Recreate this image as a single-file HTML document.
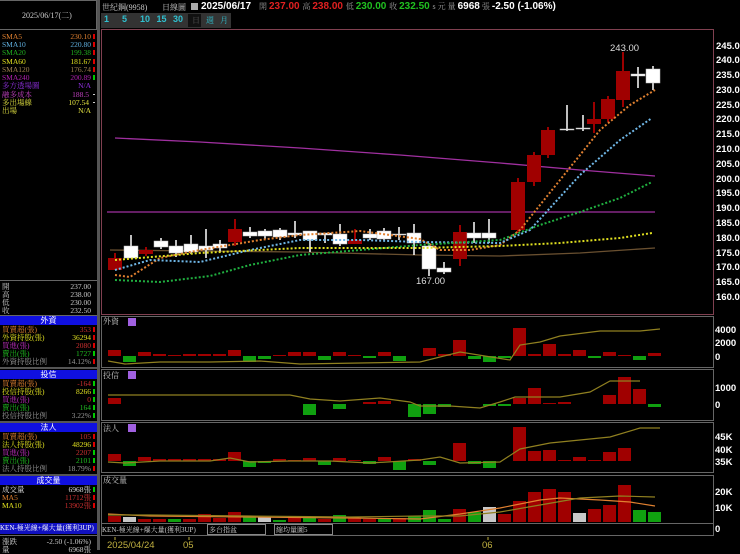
<!DOCTYPE html>
<html><head><meta charset="utf-8"><style>
*{margin:0;padding:0;box-sizing:border-box}
body{width:740px;height:550px;background:#000;overflow:hidden;position:relative;font-family:"Liberation Sans","Noto Sans CJK TC",sans-serif;color:#ddd}
.a{position:absolute;white-space:nowrap}
.s{font-size:8px;font-family:"Liberation Serif","Noto Serif CJK SC",serif}
.hd{position:absolute;left:0;width:97px;height:9px;background:#1010e0;color:#fff;font-size:8px;text-align:center;line-height:9px}
.row{position:absolute;left:2px;width:93px;font-size:7.5px;height:9px;line-height:9px;font-family:"Liberation Serif","Noto Serif CJK SC",serif}
.row span{position:absolute;right:4px}
.row i{position:absolute;right:0;top:2px;width:2px;height:5px;background:#d00}
.row i.g{background:#0c0}
</style></head><body>
<div class="a" style="left:0;top:0;width:97px;height:30px;border:1px solid #666;border-left:0"></div>
<div class="a s" style="left:22px;top:10px;color:#ccc">2025/06/17(二)</div>
<div class="a" style="left:97px;top:0;width:3px;height:550px;background:#555"></div>
<div class="row" style="top:32px;color:#e08030">SMA5<span>230.10</span><i></i></div>
<div class="row" style="top:40px;color:#60b0e0">SMA10<span>220.80</span><i></i></div>
<div class="row" style="top:48px;color:#20b020">SMA20<span>199.38</span><i></i></div>
<div class="row" style="top:57px;color:#e0e020">SMA60<span>181.67</span><i></i></div>
<div class="row" style="top:65px;color:#a08050">SMA120<span>176.74</span><i></i></div>
<div class="row" style="top:73px;color:#b020b0">SMA240<span>200.89</span><i class="g"></i></div>
<div class="row" style="top:81px;color:#9030e0">多方透場圖<span>N/A</span></div>
<div class="row" style="top:90px;color:#c040c0">融多成本<span style="right:6px">188.5</span><i style="background:#ccc;height:1px;top:4px"></i></div>
<div class="row" style="top:98px;color:#e0e040">多出場線<span style="right:6px">107.54</span><i style="background:#ccc;height:1px;top:4px"></i></div>
<div class="row" style="top:106px;color:#e0e040">出場<span>N/A</span></div>
<div class="a" style="left:0;top:280px;width:97px;height:1px;background:#666"></div>
<div class="row" style="top:282px;color:#ccc">開<span>237.00</span></div>
<div class="row" style="top:290px;color:#ccc">高<span>238.00</span></div>
<div class="row" style="top:298px;color:#ccc">低<span>230.00</span></div>
<div class="row" style="top:306px;color:#ccc">收<span>232.50</span></div>
<div class="a" style="left:0;top:315px;width:97px;height:1px;background:#666"></div>
<div class="hd" style="top:316px">外資</div>
<div class="row" style="top:325px;color:#e08030">買賣超(張)<span style="color:#d03030">353</span><i></i></div>
<div class="row" style="top:333px;color:#e0e020">外資持股(張)<span>36294</span><i></i></div>
<div class="row" style="top:341px;color:#c030c0">買進(張)<span style="color:#d03030">2080</span><i></i></div>
<div class="row" style="top:349px;color:#20c020">賣出(張)<span>1727</span><i class="g"></i></div>
<div class="row" style="top:357px;color:#999">外資持股比例<span>14.12%</span><i></i></div>
<div class="a" style="left:0;top:367px;width:97px;height:2px;background:#555"></div>
<div class="hd" style="top:370px">投信</div>
<div class="row" style="top:379px;color:#e08030">買賣超(張)<span style="color:#d03030">-164</span><i class="g"></i></div>
<div class="row" style="top:387px;color:#e0e020">投信持股(張)<span>8266</span><i class="g"></i></div>
<div class="row" style="top:395px;color:#c030c0">買進(張)<span style="color:#d03030">0</span><i class="g"></i></div>
<div class="row" style="top:403px;color:#20c020">賣出(張)<span>164</span><i class="g"></i></div>
<div class="row" style="top:411px;color:#999">投信持股比例<span>3.22%</span><i class="g"></i></div>
<div class="a" style="left:0;top:421px;width:97px;height:2px;background:#555"></div>
<div class="hd" style="top:423px">法人</div>
<div class="row" style="top:432px;color:#e08030">買賣超(張)<span style="color:#d03030">105</span><i></i></div>
<div class="row" style="top:440px;color:#e0e020">法人持股(張)<span>48296</span><i></i></div>
<div class="row" style="top:448px;color:#c030c0">買進(張)<span style="color:#d03030">2207</span><i class="g"></i></div>
<div class="row" style="top:456px;color:#20c020">賣出(張)<span>2101</span><i class="g"></i></div>
<div class="row" style="top:464px;color:#999">法人持股比例<span>18.79%</span><i></i></div>
<div class="a" style="left:0;top:474px;width:97px;height:2px;background:#555"></div>
<div class="hd" style="top:476px">成交量</div>
<div class="row" style="top:485px;color:#ddd">成交量<span>6968張</span><i class="g"></i></div>
<div class="row" style="top:493px;color:#e08030">MA5<span style="color:#d03030">11712張</span><i></i></div>
<div class="row" style="top:501px;color:#e0e020">MA10<span style="color:#d03030">13902張</span><i></i></div>
<div class="a" style="left:0;top:523px;width:97px;height:11px;background:#1010c0;color:#fff;line-height:11px;font-size:7px;font-family:'Liberation Serif','Noto Serif CJK SC',serif;overflow:hidden">KEN-極光線+爆大量(獲利3UP)</div>
<div class="a" style="left:0;top:535px;width:97px;height:1px;background:#666"></div>
<div class="row" style="top:537px;color:#ccc">漲跌<span>-2.50 (-1.06%)</span></div>
<div class="row" style="top:545px;color:#ccc">量<span>6968張</span></div>

<div class="a s" style="left:102px;top:2px;color:#ccc">世紀鋼(9958)</div>
<div class="a s" style="left:162px;top:2px;color:#ccc">日線圖</div>
<div class="a" style="left:191px;top:3px;width:7px;height:7px;background:#aaa"></div>
<div class="a" style="left:201px;top:1px;font-size:10px;font-weight:bold;color:#fff">2025/06/17</div>
<div class="a" style="left:259px;top:1px;font-size:10px;font-weight:bold;color:#e02020"><span class="s" style="color:#999;font-weight:normal">開 </span>237.00 <span class="s" style="color:#999;font-weight:normal">高 </span>238.00 <span class="s" style="color:#999;font-weight:normal">低 </span><span style="color:#20c020">230.00</span> <span class="s" style="color:#999;font-weight:normal">收 </span><span style="color:#20c020">232.50</span> <span class="s" style="color:#999;font-weight:normal">s 元 量 </span><span style="color:#fff">6968</span><span class="s" style="color:#999;font-weight:normal"> 張 </span> <span style="color:#fff">-2.50 (-1.06%)</span></div>
<div class="a" style="left:101px;top:13px;width:130px;height:15px;background:#333"></div>
<div class="a" style="left:104px;top:14px;font-size:9px;font-weight:bold;color:#30c0d0;word-spacing:4px">1 &nbsp;5 &nbsp;10 15 30 60</div>
<div class="a" style="left:188px;top:14px;width:13px;height:13px;background:#111"></div>
<div class="a s" style="left:192px;top:15px;color:#555">日</div>
<div class="a s" style="left:206px;top:15px;color:#30c0d0">週</div>
<div class="a s" style="left:220px;top:15px;color:#30c0d0">月</div>

<svg class="a" style="left:0;top:0" width="740" height="550" id="sv">
<rect x="101.5" y="29.5" width="612" height="285" fill="none" stroke="#804050"/>
<rect x="101.5" y="316.5" width="612" height="51" fill="none" stroke="#666"/>
<rect x="101.5" y="369.5" width="612" height="51" fill="none" stroke="#666"/>
<rect x="101.5" y="422.5" width="612" height="50" fill="none" stroke="#666"/>
<rect x="101.5" y="475.5" width="612" height="60" fill="none" stroke="#666"/>
<rect x="101.5" y="523.5" width="612" height="12" fill="#000" stroke="#666"/>
<line x1="107" y1="212" x2="655" y2="212" stroke="#a030a0" stroke-width="1.3"/>
<polyline points="115,138 200,142 300,148 400,155 500,163 580,170 655,176" fill="none" stroke="#a030a0" stroke-width="1.3"/>
<polyline points="110,250 200,251 300,252 420,255 500,256 580,253 655,248" fill="none" stroke="#6a5030" stroke-width="1.3"/>
<g id="g"></g>
<g font-family="Liberation Sans" font-size="9.5" fill="#fff" font-weight="bold">
<text x="716" y="49">245.0</text><text x="716" y="63">240.0</text><text x="716" y="78">235.0</text><text x="716" y="93">230.0</text><text x="716" y="108">225.0</text><text x="716" y="122">220.0</text><text x="716" y="137">215.0</text><text x="716" y="152">210.0</text><text x="716" y="167">205.0</text><text x="716" y="182">200.0</text><text x="716" y="196">195.0</text><text x="716" y="211">190.0</text><text x="716" y="226">185.0</text><text x="716" y="241">180.0</text><text x="716" y="256">175.0</text><text x="716" y="270">170.0</text><text x="716" y="285">165.0</text><text x="716" y="300">160.0</text>
<text x="715" y="333">4000</text><text x="715" y="346">2000</text><text x="715" y="360">0</text>
<text x="715" y="391">1000</text><text x="715" y="408">0</text>
<text x="715" y="440">45K</text><text x="715" y="453">40K</text><text x="715" y="465">35K</text>
<text x="715" y="495">20K</text><text x="715" y="511">10K</text><text x="715" y="532">0</text>
<text x="610" y="51" font-weight="normal" fill="#ddd">243.00</text>
<text x="416" y="284" font-weight="normal" fill="#ddd">167.00</text>
<text x="107" y="548" fill="#c0b040" font-weight="normal">2025/04/24</text>
<text x="183" y="548" fill="#c0b040" font-weight="normal">05</text>
<text x="482" y="548" fill="#c0b040" font-weight="normal">06</text>
</g>
<g font-size="8" fill="#ccc" font-family="Liberation Serif,Noto Serif CJK SC,serif">
<text x="103" y="324">外資</text><text x="103" y="378">投信</text><text x="103" y="431">法人</text><text x="103" y="483">成交量</text>
<text x="102" y="532" font-size="7" fill="#ccc">KEN-極光線+爆大量(獲利3UP)</text>
<text x="209" y="532" font-size="7">多台指盆</text><text x="276" y="532" font-size="7">縮均量圖5</text>
</g>
<rect x="128" y="318" width="8" height="8" fill="#a060e0"/><rect x="128" y="371" width="8" height="8" fill="#a060e0"/><rect x="128" y="424" width="8" height="8" fill="#a060e0"/>
<rect x="207.5" y="524.5" width="58" height="10" fill="#000" stroke="#888"/><rect x="274.5" y="524.5" width="58" height="10" fill="#000" stroke="#888"/>
<text x="209" y="532" font-size="7" fill="#ccc" font-family="Liberation Serif,Noto Serif CJK SC,serif">多台指盆</text><text x="276" y="532" font-size="7" fill="#ccc" font-family="Liberation Serif,Noto Serif CJK SC,serif">縮均量圖5</text>
<line x1="115" y1="537" x2="115" y2="540" stroke="#c0b040"/><line x1="189" y1="537" x2="189" y2="540" stroke="#c0b040"/><line x1="488" y1="537" x2="488" y2="540" stroke="#c0b040"/>
</svg>
<script>
var g=document.getElementById('g'),h='';
function R(x,y,w,hh,c){h+='<rect x="'+x+'" y="'+y+'" width="'+w+'" height="'+Math.max(hh,1)+'" fill="'+c+'"/>';}
function L(x,y1,y2,c){h+='<line x1="'+x+'" y1="'+y1+'" x2="'+x+'" y2="'+y2+'" stroke="'+c+'" stroke-width="1.5"/>';}
function P(pts,c,d){h+='<polyline points="'+pts+'" fill="none" stroke="'+c+'" stroke-width="'+(d?2:1.2)+'"'+(d?' stroke-dasharray="2,2"':'')+'/>';}
var C=[[108,258,270,253,270,1],[124,246,258,235,258,0],[139,250,254,247,256,1],[154,241,247,238,249,0],[169,246,253,240,257,0],[184,244,252,235,254,0],[199,246,250,229,258,0],[213,244,248,240,252,0],[228,229,242,219,246,1],[243,232,236,227,238,0],[258,231,236,229,239,0],[273,230,237,228,240,0],[288,233,235,221,238,0],[303,231,240,231,252,0],[318,233,235,233,243,0],[333,234,244,224,246,0],[348,240,244,229,244,1],[363,234,238,229,240,0],[377,231,239,228,240,0],[392,234,235,227,240,0],[407,233,243,224,255,0],[422,246,269,243,276,0],[437,268,272,262,274,0],[453,232,259,225,266,1],[467,233,238,222,243,0],[482,233,238,219,243,0],[511,182,230,178,233,1],[527,155,182,152,186,1],[541,130,155,127,158,1],[560,129,130,105,131,0],[576,128,129,115,131,0],[587,119,124,102,133,1],[601,99,119,96,122,1],[616,71,100,52,107,1],[631,74,76,67,88,0],[646,69,83,66,90,0]];
C.forEach(function(c){var col=c[5]?'#a00000':'#fff';L(c[0]+7,c[3],c[4],c[5]?'#d00000':'#fff');R(c[0],c[1],14,c[2]-c[1],col);if(!c[5])h+='<rect x="'+c[0]+'" y="'+c[1]+'" width="14" height="'+Math.max(c[2]-c[1],1)+'" fill="none" stroke="#bbb" stroke-width=".5"/>';});
P('115,275 130,277 160,258 200,250 260,240 300,235 360,231 420,239 440,250 470,250 500,245 520,230 560,180 600,130 630,105 655,90','#e08030',1);
P('115,270 150,260 200,262 250,250 300,240 360,240 420,242 500,243 530,230 580,175 620,140 652,118','#70b8e8',1);
P('115,280 160,282 210,276 250,265 300,255 360,250 420,245 500,240 540,225 580,212 620,198 652,182','#20b040',1);
P('115,260 200,253 300,248 420,248 500,246 560,243 620,238 652,233','#e0e020',1);
var X=function(i){return 108+15*i;};
function bars(base,vals){vals.forEach(function(v,i){if(v===0)return;var col=v>0?'#a00000':'#10a010';if(v>0)R(X(i),base-v,13,v,col);else R(X(i),base,13,-v,col);});}
bars(356,[6,-6,4,2,1,2,2,2,6,-6,-3,1,4,4,-4,4,1,-2,4,-5,0,8,2,16,-3,-6,-2,28,2,12,2,6,-2,4,1,-4,3]);
P('108,361 125,364 160,362 210,362 260,361 300,364 360,363 420,362 460,352 510,360 520,345 540,342 560,336 600,331 640,331 660,329','#908020');
bars(404,[6,0,0,0,0,0,0,0,0,0,0,0,0,-11,0,-5,0,2,3,0,-13,-10,-3,0,0,-2,-2,6,16,1,2,0,0,9,27,15,-3]);
P('108,395 290,395 310,399 340,401 380,398 410,402 420,406 450,406 480,408 500,402 515,397 560,397 590,392 610,381 640,381','#908020');
bars(461,[7,-5,4,2,2,2,2,2,9,-6,-2,2,1,3,-4,3,1,-3,4,-9,2,-4,0,18,-3,-7,0,34,10,11,1,4,1,9,13,0,0]);
P('108,462 125,463 160,461 210,461 230,458 250,462 290,461 330,461 370,463 420,460 440,457 460,463 500,462 520,449 550,443 580,440 610,437 640,428 660,428','#908020');
var V=[516,517,519,519,519,519,514,518,512,516,517,520,518,517,519,515,518,519,519,518,516,510,519,509,512,507,514,501,492,489,492,513,509,505,485,510,512];
var VC='rwrrgrrrrgwgrgrgrrgrgggrgwrrrrrwrrrgg';
V.forEach(function(t,i){var c=VC[i]=='r'?'#a00000':VC[i]=='g'?'#10a010':'#c8c8c8';R(X(i),t,13,522-t,c);});
P('108,514 150,516 250,517 350,518 420,519 460,514 500,508 540,500 560,498 600,500 630,502 655,506','#e08030');
P('108,515 150,515 250,516 350,517 420,516 460,516 500,512 540,505 580,498 620,496 655,497','#908020');
g.innerHTML=h;
</script>
</body></html>
